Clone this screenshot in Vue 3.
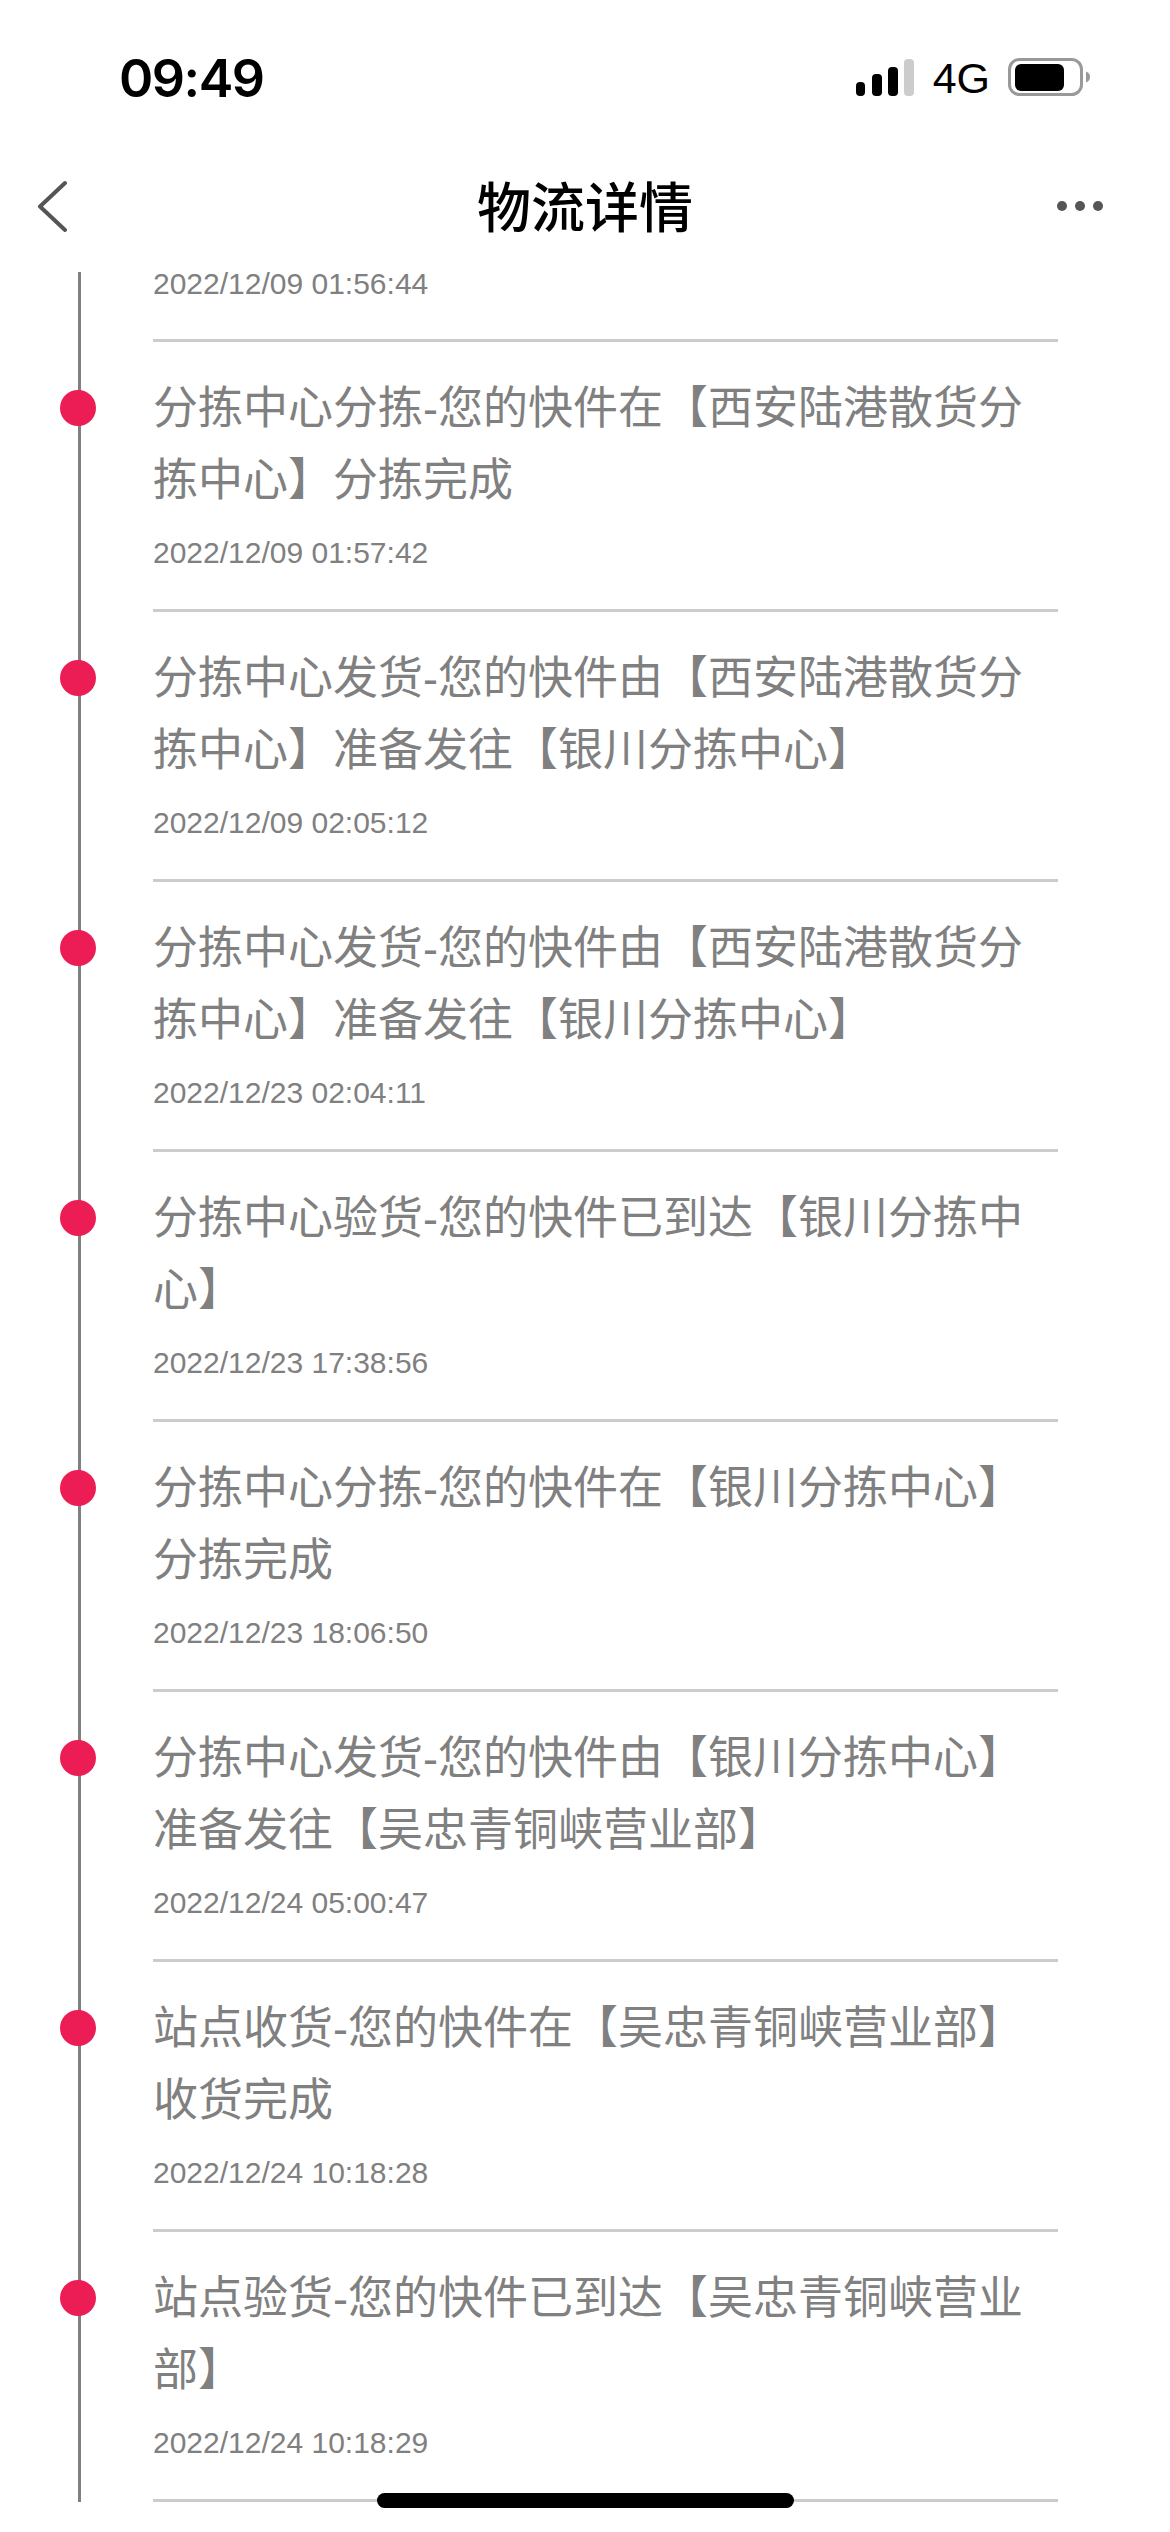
<script setup>
const items = [
	{ text: '分拣中心分拣-您的快件在【西安陆港散货分拣中心】分拣完成', time: '2022/12/09 01:57:42' },
	{ text: '分拣中心发货-您的快件由【西安陆港散货分拣中心】准备发往【银川分拣中心】', time: '2022/12/09 02:05:12' },
	{ text: '分拣中心发货-您的快件由【西安陆港散货分拣中心】准备发往【银川分拣中心】', time: '2022/12/23 02:04:11' },
	{ text: '分拣中心验货-您的快件已到达【银川分拣中心】', time: '2022/12/23 17:38:56' },
	{ text: '分拣中心分拣-您的快件在【银川分拣中心】分拣完成', time: '2022/12/23 18:06:50' },
	{ text: '分拣中心发货-您的快件由【银川分拣中心】准备发往【吴忠青铜峡营业部】', time: '2022/12/24 05:00:47' },
	{ text: '站点收货-您的快件在【吴忠青铜峡营业部】收货完成', time: '2022/12/24 10:18:28' },
	{ text: '站点验货-您的快件已到达【吴忠青铜峡营业部】', time: '2022/12/24 10:18:29' }
];
</script>

<template>
	<div class="page">
		<div class="status">
			<span class="status__time">09:49</span>
			<div class="status__right">
				<svg class="status__signal" width="58" height="38" viewBox="0 0 58 38">
					<rect x="0" y="23" width="9" height="14" rx="4" fill="#000" />
					<rect x="16" y="15" width="10" height="22" rx="4" fill="#000" />
					<rect x="32" y="8" width="10" height="29" rx="4" fill="#000" />
					<rect x="48" y="0" width="10" height="37" rx="4" fill="#ccc" />
				</svg>
				<span class="status__net">4G</span>
				<svg class="status__battery" width="83" height="40" viewBox="0 0 83 40">
					<rect x="1.500" y="1.500" width="72" height="35" rx="10" fill="none" stroke="#999" stroke-width="3" />
					<rect x="7" y="6" width="49" height="27" rx="6" fill="#000" />
					<path d="M78 13.500 C81 14.500 82 16.500 82 19 C82 21.500 81 23.500 78 24.500 Z" fill="#999" />
				</svg>
			</div>
		</div>

		<div class="nav">
			<svg class="nav__back" width="30" height="54" viewBox="0 0 30 54">
				<path d="M28 4 L3 27.500 L28 51" fill="none" stroke="#555" stroke-width="4" stroke-linecap="round" stroke-linejoin="round" />
			</svg>
			<h1 class="nav__title">物流详情</h1>
			<div class="nav__more">
				<span></span>
				<span></span>
				<span></span>
			</div>
		</div>

		<div class="list">
			<div class="list__head">
				<p class="list__time list__time--head">2022/12/09 01:56:44</p>
			</div>
			<div v-for="item in items" :key="item.time" class="list__item">
				<span class="list__dot"></span>
				<p class="list__text">{{ item.text }}</p>
				<p class="list__time">{{ item.time }}</p>
			</div>
		</div>

		<div class="home-bar"></div>
	</div>
</template>

<style>
body {
	background: #fff;
}
</style>

<style scoped>
.page {
	position: relative;
	width: 1170px;
	height: 2532px;
	overflow: hidden;
	background: #fff;
	font-family: "Liberation Sans", "Noto Sans CJK SC", sans-serif;
}

.status {
	display: flex;
	align-items: center;
	justify-content: space-between;
	height: 156px;
	padding: 0 79px 0 119px;
	box-sizing: border-box;
}

.status__time {
	font-family: Inter, "Liberation Sans", sans-serif;
	font-size: 52px;
	font-weight: 600;
	letter-spacing: -1.5px;
	color: #000;
}

.status__right {
	display: flex;
	align-items: center;
}

.status__net {
	margin: 0 18px 0 19px;
	font-family: "Liberation Sans", sans-serif;
	font-size: 43px;
	color: #000;
}

.nav {
	display: grid;
	grid-template-columns: 1fr auto 1fr;
	align-items: center;
	height: 100px;
	margin-bottom: 16px;
}

.nav__back {
	margin-left: 37px;
}

.nav__title {
	margin: 0;
	padding-bottom: 2px;
	font-family: "Noto Sans CJK SC", sans-serif;
	font-size: 54px;
	font-weight: 500;
	line-height: 72px;
	color: #000;
}

.nav__more {
	display: flex;
	justify-self: end;
	gap: 8px;
	margin-right: 67px;
}

.nav__more span {
	width: 10px;
	height: 10px;
	border-radius: 50%;
	background: #555;
}

.list {
	position: relative;
	padding-left: 153px;
}

.list::before {
	content: "";
	position: absolute;
	top: 0;
	bottom: 0;
	left: 78px;
	width: 3px;
	background: #808080;
}

.list__head {
	width: 905px;
	padding-bottom: 43px;
	border-bottom: 3px solid #ccc;
}

.list__item {
	position: relative;
	width: 905px;
	padding: 31px 0 36px;
	border-bottom: 3px solid #ccc;
}

.list__dot {
	position: absolute;
	top: 48px;
	left: -93px;
	width: 36px;
	height: 36px;
	border-radius: 50%;
	background: #ec1c55;
}

.list__text {
	margin: 0 0 16px;
	font-size: 45px;
	line-height: 72px;
	color: #808080;
}

.list__time {
	margin: 0;
	font-size: 30px;
	line-height: 40px;
	color: #808080;
}

.list__time--head {
	line-height: 24px;
}

.home-bar {
	position: absolute;
	left: 377px;
	bottom: 24px;
	width: 417px;
	height: 15px;
	border-radius: 8px;
	background: #000;
}
</style>
